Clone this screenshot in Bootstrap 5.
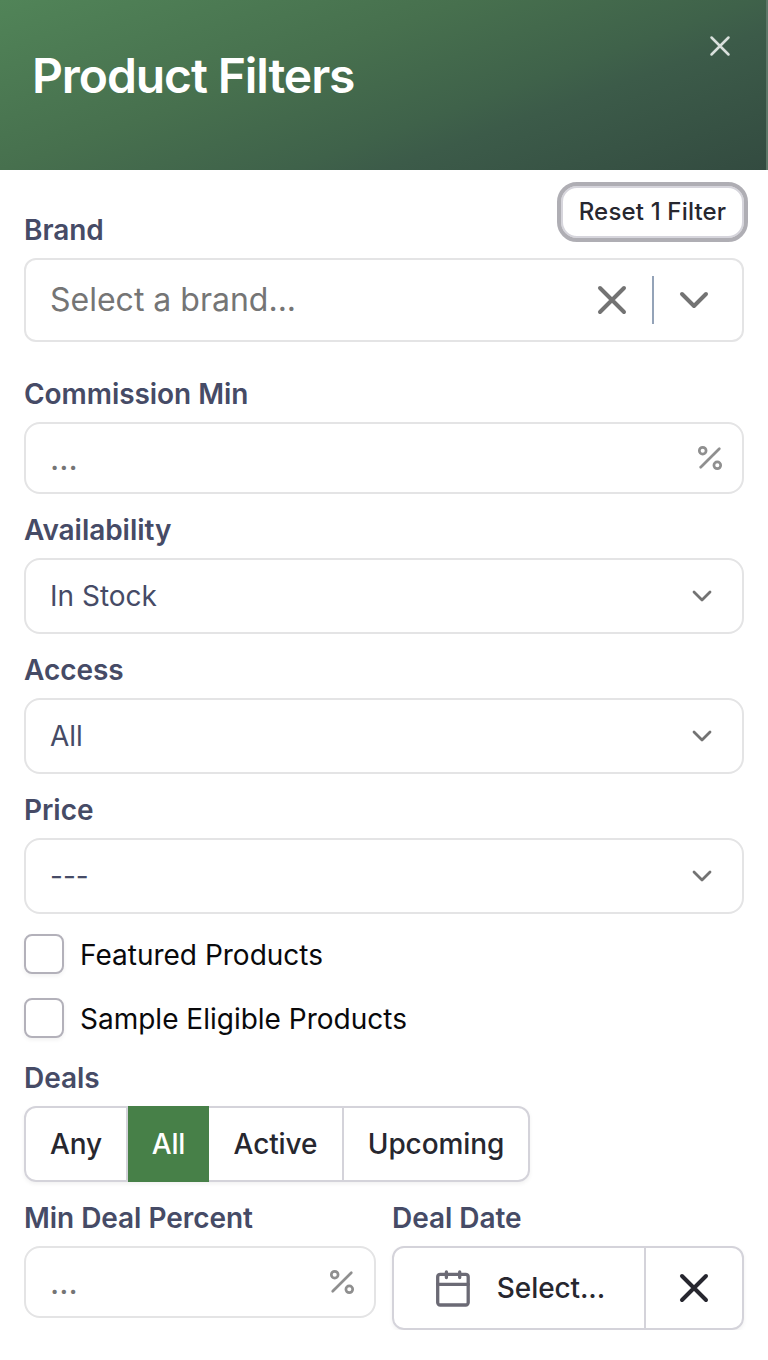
<!DOCTYPE html>
<html lang="en">
<head>
<meta charset="utf-8">
<meta name="viewport" content="width=device-width, initial-scale=1">
<title>Product Filters</title>
<link rel="stylesheet" href="https://cdn.jsdelivr.net/npm/bootstrap@5.3.0/dist/css/bootstrap.min.css">
<style>
  body { font-family: Inter, "Liberation Sans", sans-serif; font-size: 28px; line-height: 40px; color: #09090b; background: #fff; }
  .panel-head { height: 170px; padding: 44px 34px 0 32px; background: linear-gradient(160deg, #518458 0%, #47704e 38%, #3f624a 61%, #3c5b49 69%, #334b40 100%); border-right: 2px solid #5d7768; }
  .panel-title { font-size: 48px; line-height: 64px; font-weight: 600; letter-spacing: -1.1px; color: #fff; }
  .close-x { margin-top: -10px; }
  .panel-body { padding: 40px 24px 0; }
  .field-label { font-weight: 600; letter-spacing: -.05px; color: #464b66; line-height: 40px; margin-bottom: 8px; display: block; }
  .field-box { border: 2px solid #e4e4e5; border-radius: 16px; padding: 0 18px 0 24px; color: #464b66; background: #fff; }
  .h72 { height: 72px; } .h76 { height: 76px; } .field-box.h84, .seg.h84 { height: 84px; border-radius: 12px; }
  .hint { color: #757575; }
  .brand-hint { font-size: 32px; }
  .dots { font-size: 32px; padding-top: 2px; }
  .clear-x { margin-right: 24px; }
  .brand-caret { margin: 0 14px 0 24px; }
  .caret { margin-right: 10px; }
  .gap-s { margin-bottom: 16px; } .gap-l { margin-bottom: 32px; }
  .reset-btn { top: 182px; right: 20px; width: 191px; height: 60px; border: 4px solid #afaeb4; border-radius: 20px; background: #fff; box-shadow: inset 0 0 0 2px #d6d5dc; font-size: 24px; font-weight: 500; letter-spacing: .17px; line-height: 32px; color: #27272f; padding: 0; }
  .split { width: 2px; height: 48px; background: #94a3b8; }
  .check-list { margin: 20px 0; }
  .check { width: 40px; height: 40px; border: 2px solid #b3b1ba; box-shadow: 0 2px 4px rgba(0,0,0,.06); margin: 0; float: none; }
  .form-check-input.check { border-radius: 8px; }
  .check-text { padding-top: 2px; line-height: 38px; }
  .seg { height: 76px; border: 2px solid #d4d3da; border-radius: 12px; box-shadow: 0 2px 4px rgba(0,0,0,.06); color: #27272f; font-weight: 500; letter-spacing: -.1px; }
  .seg-deals { width: 506px; }
  .seg > div { border-left: 2px solid #d4d3da; display: flex; align-items: center; justify-content: center; }
  .seg > div:first-child { border-left: 0; }
  .seg .on { background: #478048; background-clip: padding-box; color: #fff; margin: -2px 0; }
  .seg .on + div { border-left: 0; }
  .seg-any { width: 100px; } .seg-all { width: 83px; } .seg-act { width: 133px; } .seg-up { flex: 1; }
  .seg-clear { width: 98px; }
  .cal { margin-right: 24px; }
  svg { display: block; flex: none; fill: none; stroke-linecap: round; stroke-linejoin: round; }
</style>
</head>
<body>
<header class="panel-head d-flex justify-content-between align-items-start">
  <h1 class="panel-title m-0">Product Filters</h1>
  <svg class="close-x" width="24" height="24" viewBox="0 0 24 24" stroke="#d9e0dc" stroke-width="2.500"><path d="M3.500 3.500l17 17M20.500 3.500l-17 17"/></svg>
</header>
<button class="reset-btn position-absolute" type="button">Reset 1 Filter</button>
<main class="panel-body">
  <span class="field-label">Brand</span>
  <div class="field-box h84 d-flex align-items-center gap-l">
    <span class="hint brand-hint flex-grow-1">Select a brand...</span>
    <svg class="clear-x" width="32" height="32" viewBox="0 0 32 32" stroke="#737373" stroke-width="4"><path d="M4 4l24 24M28 4L4 28"/></svg>
    <span class="split"></span>
    <svg class="brand-caret" width="32" height="32" viewBox="0 0 32 32" stroke="#737373" stroke-width="4"><path d="M4 10l12 12 12-12"/></svg>
  </div>

  <span class="field-label">Commission Min</span>
  <div class="field-box h72 d-flex align-items-center justify-content-between gap-s">
    <span class="hint dots">...</span>
    <svg width="28" height="28" viewBox="0 0 28 28" stroke="#8f8f8f" stroke-width="2.700"><path d="M4.700 23.300L23.300 4.700"/><circle cx="6.700" cy="6.700" r="3.400"/><circle cx="21.300" cy="21.300" r="3.400"/></svg>
  </div>

  <span class="field-label">Availability</span>
  <div class="field-box h76 d-flex align-items-center justify-content-between gap-s">
    <span>In Stock</span>
    <svg class="caret" width="24" height="24" viewBox="0 0 24 24" stroke="#737373" stroke-width="2.800"><path d="M4 8l8 8 8-8"/></svg>
  </div>

  <span class="field-label">Access</span>
  <div class="field-box h76 d-flex align-items-center justify-content-between gap-s">
    <span>All</span>
    <svg class="caret" width="24" height="24" viewBox="0 0 24 24" stroke="#737373" stroke-width="2.800"><path d="M4 8l8 8 8-8"/></svg>
  </div>

  <span class="field-label">Price</span>
  <div class="field-box h76 d-flex align-items-center justify-content-between">
    <span>---</span>
    <svg class="caret" width="24" height="24" viewBox="0 0 24 24" stroke="#737373" stroke-width="2.800"><path d="M4 8l8 8 8-8"/></svg>
  </div>

  <div class="d-flex flex-column gap-4 check-list">
    <label class="d-flex align-items-center gap-3"><input type="checkbox" class="form-check-input check"><span class="check-text">Featured Products</span></label>
    <label class="d-flex align-items-center gap-3"><input type="checkbox" class="form-check-input check"><span class="check-text">Sample Eligible Products</span></label>
  </div>

  <span class="field-label">Deals</span>
  <div class="seg seg-deals d-flex gap-s">
    <div class="seg-any">Any</div><div class="seg-all on">All</div><div class="seg-act">Active</div><div class="seg-up">Upcoming</div>
  </div>

  <div class="row gx-3">
    <div class="col-6">
      <span class="field-label">Min Deal Percent</span>
      <div class="field-box h72 d-flex align-items-center justify-content-between">
        <span class="hint dots">...</span>
        <svg width="28" height="28" viewBox="0 0 28 28" stroke="#8f8f8f" stroke-width="2.700"><path d="M4.700 23.300L23.300 4.700"/><circle cx="6.700" cy="6.700" r="3.400"/><circle cx="21.300" cy="21.300" r="3.400"/></svg>
      </div>
    </div>
    <div class="col-6">
      <span class="field-label">Deal Date</span>
      <div class="seg h84 d-flex">
        <div class="flex-grow-1">
          <svg class="cal" width="40" height="40" viewBox="0 0 40 40" stroke="#6b6a75" stroke-width="3.300"><rect x="4.700" y="6.300" width="30.500" height="30.700" rx="2.500"/><path d="M4.700 16.300h30.500M13.400 4v5.500M26.700 4v5.500"/></svg>
          <span>Select...</span>
        </div>
        <div class="seg-clear">
          <svg width="32" height="32" viewBox="0 0 32 32" stroke="#27272f" stroke-width="4"><path d="M4 4l24 24M28 4L4 28"/></svg>
        </div>
      </div>
    </div>
  </div>
</main>
<script src="https://cdn.jsdelivr.net/npm/bootstrap@5.3.0/dist/js/bootstrap.bundle.min.js"></script>
</body>
</html>
